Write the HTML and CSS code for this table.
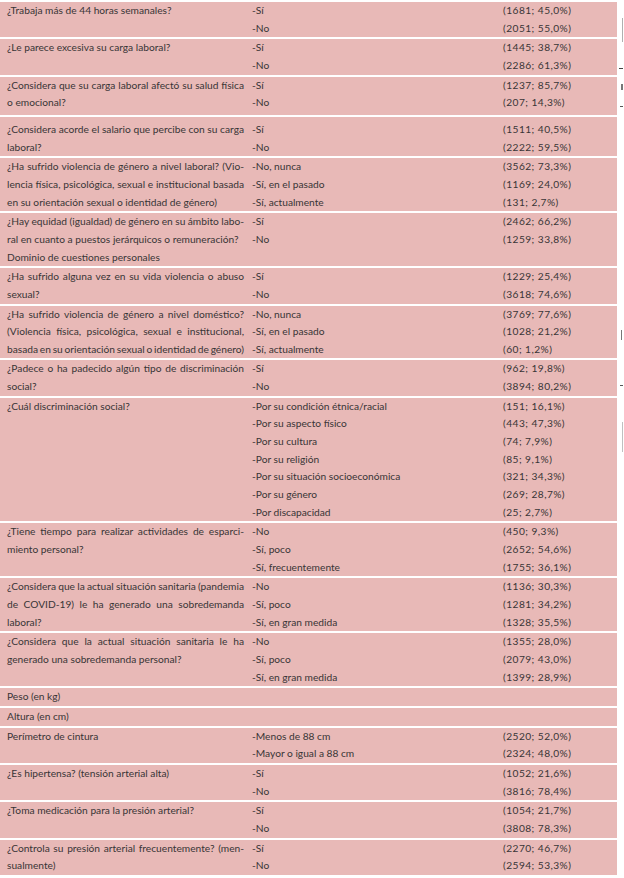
FILE: index.html
```html
<!DOCTYPE html>
<html lang="es">
<head>
<meta charset="utf-8">
<title>Tabla</title>
<link rel="stylesheet" href="styles.css">
</head>
<body>
<div class="page">
<div class="table">
  <div class="row">
    <div class="q"><span>¿Trabaja más de 44 horas semanales?</span></div>
    <div class="opts"><span>-Sí</span><span>-No</span></div>
    <div class="vals"><span>(1681; 45,0%)</span><span>(2051; 55,0%)</span></div>
  </div>
  <div class="row">
    <div class="q"><span>¿Le parece excesiva su carga laboral?</span></div>
    <div class="opts"><span>-Sí</span><span>-No</span></div>
    <div class="vals"><span>(1445; 38,7%)</span><span>(2286; 61,3%)</span></div>
  </div>
  <div class="row row-tail">
    <div class="q"><span class="j">¿Considera que su carga laboral afectó su salud física</span><span>o emocional?</span></div>
    <div class="opts"><span>-Sí</span><span>-No</span></div>
    <div class="vals"><span>(1237; 85,7%)</span><span>(207; 14,3%)</span></div>
  </div>
  <div class="row row-head">
    <div class="q"><span class="j">¿Considera acorde el salario que percibe con su carga</span><span>laboral?</span></div>
    <div class="opts"><span>-Sí</span><span>-No</span></div>
    <div class="vals"><span>(1511; 40,5%)</span><span>(2222; 59,5%)</span></div>
  </div>
  <div class="row">
    <div class="q"><span class="j">¿Ha sufrido violencia de género a nivel laboral? (Vio-</span><span class="j">lencia física, psicológica, sexual e institucional basada</span><span>en su orientación sexual o identidad de género)</span></div>
    <div class="opts"><span>-No, nunca</span><span>-Sí, en el pasado</span><span>-Sí, actualmente</span></div>
    <div class="vals"><span>(3562; 73,3%)</span><span>(1169; 24,0%)</span><span>(131; 2,7%)</span></div>
  </div>
  <div class="row">
    <div class="q"><span class="j">¿Hay equidad (igualdad) de género en su ámbito labo-</span><span>ral en cuanto a puestos jerárquicos o remuneración?</span><span>Dominio de cuestiones personales</span></div>
    <div class="opts"><span>-Sí</span><span>-No</span></div>
    <div class="vals"><span>(2462; 66,2%)</span><span>(1259; 33,8%)</span></div>
  </div>
  <div class="row">
    <div class="q"><span class="j">¿Ha sufrido alguna vez en su vida violencia o abuso</span><span>sexual?</span></div>
    <div class="opts"><span>-Sí</span><span>-No</span></div>
    <div class="vals"><span>(1229; 25,4%)</span><span>(3618; 74,6%)</span></div>
  </div>
  <div class="row">
    <div class="q"><span class="j">¿Ha sufrido violencia de género a nivel doméstico?</span><span class="j">(Violencia física, psicológica, sexual e institucional,</span><span class="j">basada en su orientación sexual o identidad de género)</span></div>
    <div class="opts"><span>-No, nunca</span><span>-Sí, en el pasado</span><span>-Sí, actualmente</span></div>
    <div class="vals"><span>(3769; 77,6%)</span><span>(1028; 21,2%)</span><span>(60; 1,2%)</span></div>
  </div>
  <div class="row">
    <div class="q"><span class="j">¿Padece o ha padecido algún tipo de discriminación</span><span>social?</span></div>
    <div class="opts"><span>-Sí</span><span>-No</span></div>
    <div class="vals"><span>(962; 19,8%)</span><span>(3894; 80,2%)</span></div>
  </div>
  <div class="row">
    <div class="q"><span>¿Cuál discriminación social?</span></div>
    <div class="opts"><span>-Por su condición étnica/racial</span><span>-Por su aspecto físico</span><span>-Por su cultura</span><span>-Por su religión</span><span>-Por su situación socioeconómica</span><span>-Por su género</span><span>-Por discapacidad</span></div>
    <div class="vals"><span>(151; 16,1%)</span><span>(443; 47,3%)</span><span>(74; 7,9%)</span><span>(85; 9,1%)</span><span>(321; 34,3%)</span><span>(269; 28,7%)</span><span>(25; 2,7%)</span></div>
  </div>
  <div class="row">
    <div class="q"><span class="j">¿Tiene tiempo para realizar actividades de esparci-</span><span>miento personal?</span></div>
    <div class="opts"><span>-No</span><span>-Sí, poco</span><span>-Sí, frecuentemente</span></div>
    <div class="vals"><span>(450; 9,3%)</span><span>(2652; 54,6%)</span><span>(1755; 36,1%)</span></div>
  </div>
  <div class="row">
    <div class="q"><span class="j">¿Considera que la actual situación sanitaria (pandemia</span><span class="j">de COVID-19) le ha generado una sobredemanda</span><span>laboral?</span></div>
    <div class="opts"><span>-No</span><span>-Sí, poco</span><span>-Sí, en gran medida</span></div>
    <div class="vals"><span>(1136; 30,3%)</span><span>(1281; 34,2%)</span><span>(1328; 35,5%)</span></div>
  </div>
  <div class="row">
    <div class="q"><span class="j">¿Considera que la actual situación sanitaria le ha</span><span>generado una sobredemanda personal?</span></div>
    <div class="opts"><span>-No</span><span>-Sí, poco</span><span>-Sí, en gran medida</span></div>
    <div class="vals"><span>(1355; 28,0%)</span><span>(2079; 43,0%)</span><span>(1399; 28,9%)</span></div>
  </div>
  <div class="row">
    <div class="q"><span>Peso (en kg)</span></div>
    <div class="opts"></div>
    <div class="vals"></div>
  </div>
  <div class="row">
    <div class="q"><span>Altura (en cm)</span></div>
    <div class="opts"></div>
    <div class="vals"></div>
  </div>
  <div class="row">
    <div class="q"><span>Perímetro de cintura</span></div>
    <div class="opts"><span>-Menos de 88 cm</span><span>-Mayor o igual a 88 cm</span></div>
    <div class="vals"><span>(2520; 52,0%)</span><span>(2324; 48,0%)</span></div>
  </div>
  <div class="row">
    <div class="q"><span>¿Es hipertensa? (tensión arterial alta)</span></div>
    <div class="opts"><span>-Sí</span><span>-No</span></div>
    <div class="vals"><span>(1052; 21,6%)</span><span>(3816; 78,4%)</span></div>
  </div>
  <div class="row">
    <div class="q"><span>¿Toma medicación para la presión arterial?</span></div>
    <div class="opts"><span>-Sí</span><span>-No</span></div>
    <div class="vals"><span>(1054; 21,7%)</span><span>(3808; 78,3%)</span></div>
  </div>
  <div class="row">
    <div class="q"><span class="j">¿Controla su presión arterial frecuentemente? (men-</span><span>sualmente)</span></div>
    <div class="opts"><span>-Sí</span><span>-No</span></div>
    <div class="vals"><span>(2270; 46,7%)</span><span>(2594; 53,3%)</span></div>
  </div>
</div>
<div class="gutter">
  <span class="mark m1"></span>
  <span class="mark m2"></span>
  <span class="mark m3"></span>
  <span class="mark m4"></span>
  <span class="mark m5"></span>
  <span class="mark m6"></span>
  <span class="mark m7"></span>
</div>
</div>
</body>
</html>
```
FILE: styles.css
```css
html, body {
  margin: 0;
  padding: 0;
  background: #ffffff;
}

.page {
  display: flex;
  width: 624px;
  padding-top: 2px;
  font-family: Lato, "Open Sans", sans-serif;
  font-size: 10.2px;
  color: #383536;
}

.table {
  width: 617px;
  display: flex;
  flex-direction: column;
  gap: 2px;
}

.row {
  display: grid;
  grid-template-columns: 252px 251px 1fr;
  background: #e8b9b7;
  line-height: 17.65px;
}

.row-tail {
  padding-bottom: 3px;
}

.row-head {
  padding-top: 4px;
}

.q {
  padding-left: 7px;
  padding-right: 8px;
  display: flex;
  flex-direction: column;
}

.q span,
.opts span,
.vals span {
  display: block;
  white-space: nowrap;
}

.q .j {
  text-align: justify;
  text-align-last: justify;
  word-spacing: -1.6px;
}

.opts,
.vals {
  display: flex;
  flex-direction: column;
}

.vals {
  letter-spacing: 0.45px;
}

.gutter {
  position: relative;
  flex: 1;
}

.mark {
  position: absolute;
  background: #8a8a8a;
}

.m1 { left: 5px; top: 16px; width: 1px; height: 24px; background: #b0b0b0; }
.m2 { left: 2px; top: 66px; width: 4px; height: 1px; background: #444; }
.m3 { left: 4px; top: 82px; width: 2px; height: 6px; background: #777; }
.m4 { left: 3px; top: 104px; width: 3px; height: 1px; background: #555; }
.m5 { left: 4px; top: 328px; width: 1px; height: 10px; background: #777; }
.m6 { left: 3px; top: 383px; width: 3px; height: 1px; background: #555; }
.m7 { left: 5px; top: 420px; width: 1px; height: 30px; background: #c0c0c0; }
```
